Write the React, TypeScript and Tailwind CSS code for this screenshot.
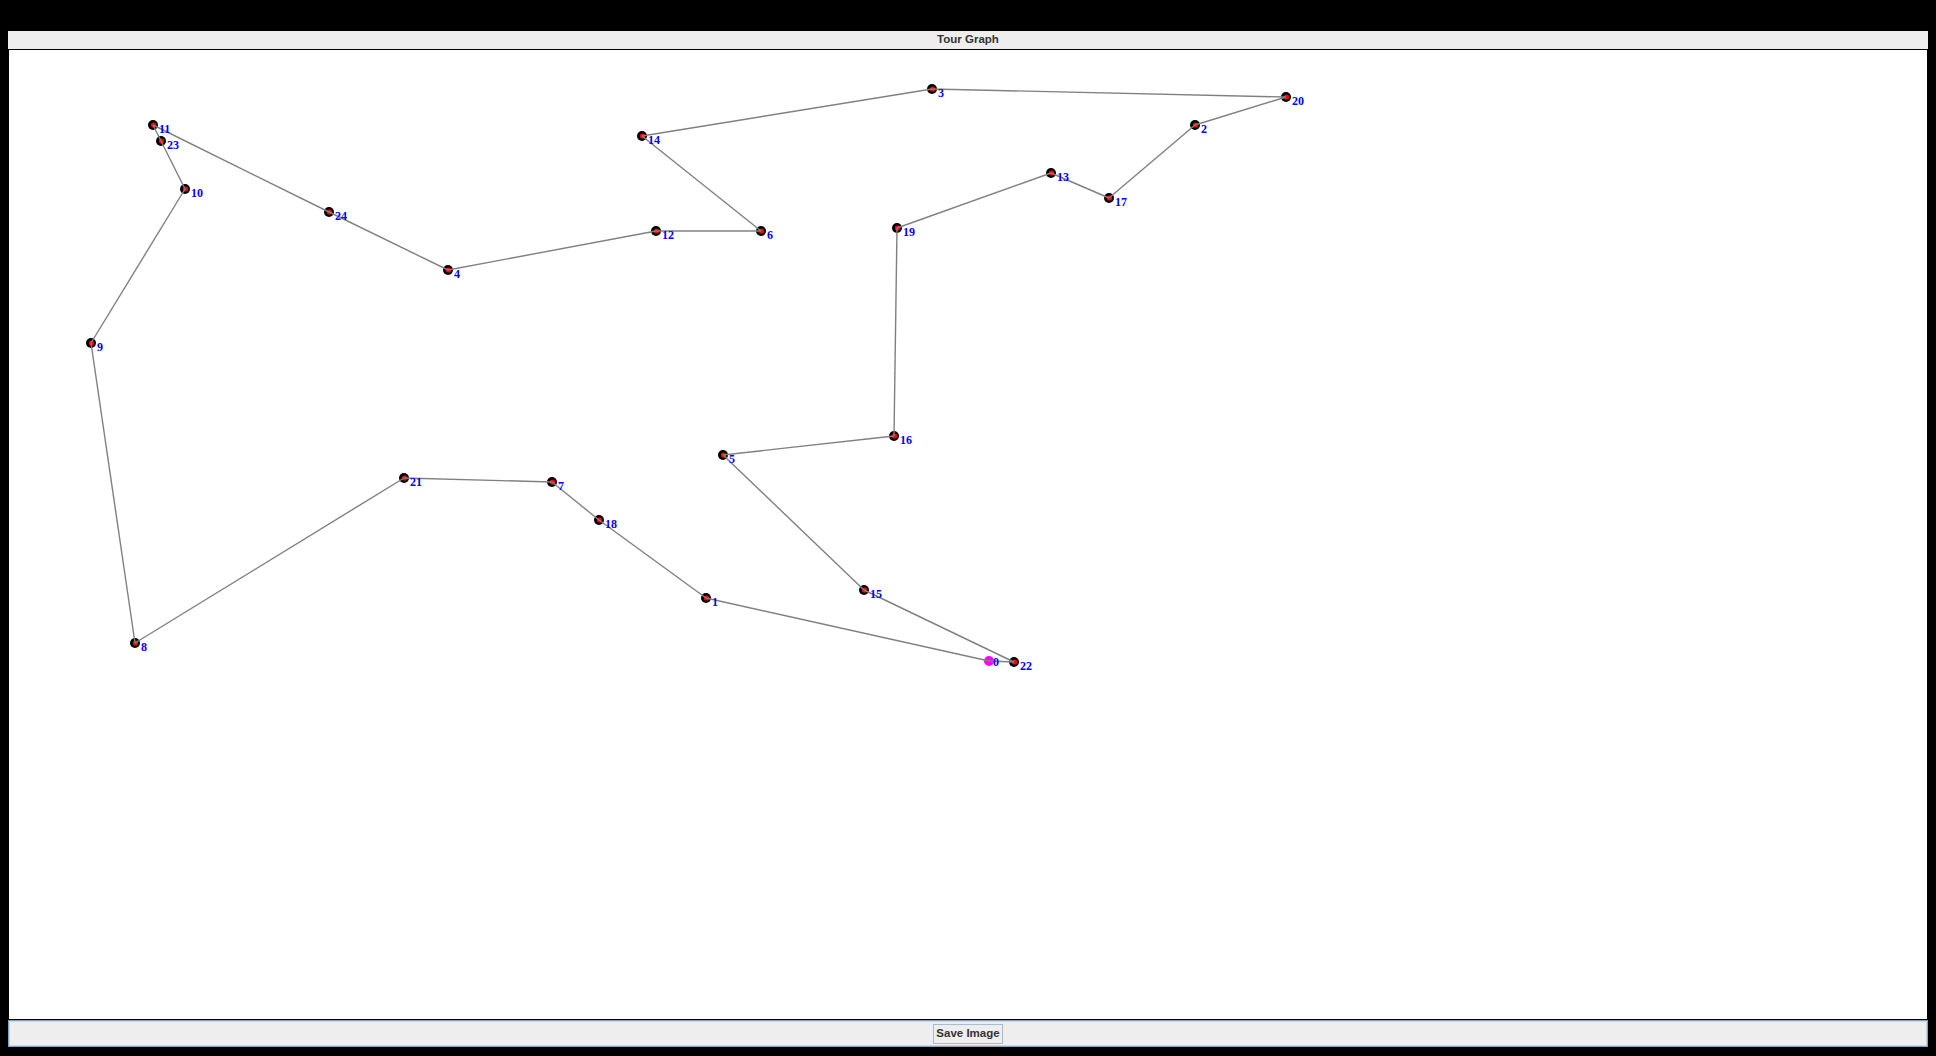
const nodes: Record<number, [number, number]> = {
  0: [989, 661],
  1: [706, 598],
  2: [1195, 125],
  3: [932, 89],
  4: [448, 270],
  5: [723, 455],
  6: [761, 231],
  7: [552, 482],
  8: [135, 643],
  9: [91, 343],
  10: [185, 189],
  11: [153, 125],
  12: [656, 231],
  13: [1051, 173],
  14: [642, 136],
  15: [864, 590],
  16: [894, 436],
  17: [1109, 198],
  18: [599, 520],
  19: [897, 228],
  20: [1286, 97],
  21: [404, 478],
  22: [1014, 662],
  23: [161, 141],
  24: [329, 212],
};

const tour = [0, 22, 15, 5, 16, 19, 13, 17, 2, 20, 3, 14, 6, 12, 4, 24, 11, 23, 10, 9, 8, 21, 7, 18, 1, 0];

const TourGraph = () => {
  const ids = Object.keys(nodes).map(Number);

  return (
    <svg className="block w-full h-full" viewBox="9 50 1918 969">
      {/* Cities */}
      {ids
        .filter((id) => id !== 0)
        .map((id) => (
          <g key={id}>
            <circle cx={nodes[id][0]} cy={nodes[id][1]} r={5} fill="#000" />
            <circle cx={nodes[id][0] + 0.5} cy={nodes[id][1]} r={2.6} fill="#ff0000" />
          </g>
        ))}
      <circle cx={nodes[0][0]} cy={nodes[0][1]} r={5} fill="#ff00ff" />

      {/* Edges */}
      {tour.slice(1).map((id, i) => {
        const [x1, y1] = nodes[tour[i]];
        const [x2, y2] = nodes[id];
        return (
          <line key={i} x1={x1} y1={y1} x2={x2} y2={y2} stroke="#808080" strokeWidth={1.4} />
        );
      })}

      {/* Labels */}
      {ids.map((id) => (
        <text
          key={id}
          x={nodes[id][0] + (id === 0 ? 4 : 6)}
          y={nodes[id][1] + (id === 0 ? 5 : 8)}
          fill="#0000ff"
          fontSize={12}
          fontWeight={700}
          fontFamily='"Liberation Serif", serif'
        >
          {id}
        </text>
      ))}
    </svg>
  );
};

const App = () => {
  return (
    <div className="w-[1936px] h-[1056px] bg-black flex flex-col pt-[31px] pb-[9px] px-[8px] font-['Liberation_Sans',sans-serif]">
      {/* Title */}
      <div className="h-[19px] bg-[#eeeeee] border-b border-black flex items-center justify-center text-[11.5px] font-bold text-[#333333] leading-none">
        Tour Graph
      </div>

      {/* Canvas */}
      <div className="flex-1 bg-white mx-[1px] min-h-0">
        <TourGraph />
      </div>

      {/* Bottom bar */}
      <div className="mt-[1px] h-[27px] border border-[#8aa3bc] bg-[#eeeeee] shadow-[inset_0_0_0_1px_#c4d6e8] flex items-center justify-center">
        <button className="h-[20px] px-[2px] border border-[#a3bdd6] bg-[#eeeeee] text-[11.5px] font-bold text-[#333333] leading-none">
          Save Image
        </button>
      </div>
    </div>
  );
};

export default App;
